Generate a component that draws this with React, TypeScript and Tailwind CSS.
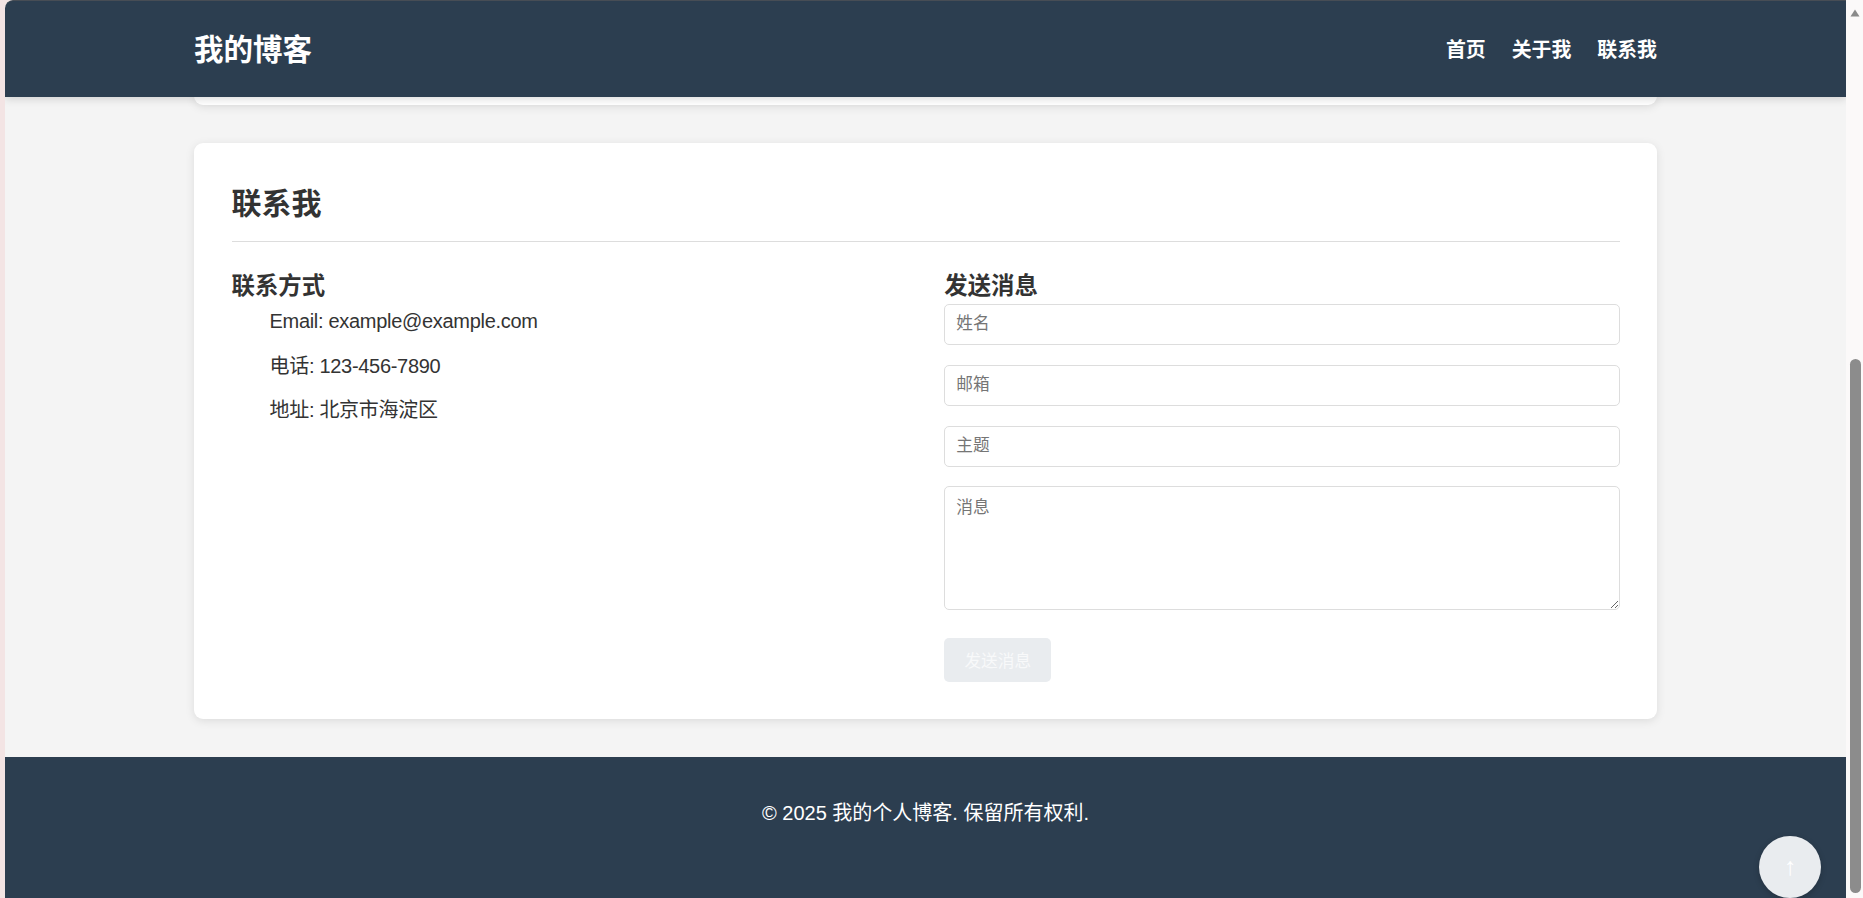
import React from "react";

const links = ["首页", "关于我", "联系我"];

const contactInfo = [
  "Email: example@example.com",
  "电话: 123-456-7890",
  "地址: 北京市海淀区",
];

const inputClass =
  "block w-full h-[41.5px] rounded-[5px] border border-[#dddddd] bg-white px-[11px] text-[16.67px] text-[#333] placeholder:text-[#757575] outline-none";

const Header = () => (
  <header className="relative z-10 h-[97px] shrink-0 rounded-tl-lg border-t border-[#474d55] bg-[#2c3e50] shadow-[0_2px_8px_rgba(0,0,0,0.15)]">
    <div className="mx-auto flex h-full w-[1463px] items-center justify-between pt-[2px]">
      <h1 className="text-[29.5px] font-bold text-white">我的博客</h1>
      <nav className="flex gap-[26px] pt-[2px] text-[19.9px] font-bold text-white">
        {links.map((l) => (
          <a key={l} href="#">
            {l}
          </a>
        ))}
      </nav>
    </div>
  </header>
);

const ContactCard = () => (
  <section className="mx-auto mt-[38px] h-[576px] w-[1463px] shrink-0 rounded-[9px] bg-white p-[37.5px] shadow-[0_2px_10px_rgba(0,0,0,0.1)]">
    <h2 className="border-b border-[#dddddd] pb-[15px] text-[30px] font-bold leading-[45px] text-[#333]">
      联系我
    </h2>

    <div className="mt-[27px] grid grid-cols-2 gap-[37.5px]">
      {/* left column */}
      <div>
        <h3 className="text-[23.4px] font-bold leading-[35px] text-[#333]">联系方式</h3>
        <ul className="mt-[1.5px] pl-[38px]">
          {contactInfo.map((c) => (
            <li key={c} className="mb-[12.5px] text-[20px] leading-[32px] tracking-[-0.3px] text-[#333]">
              {c}
            </li>
          ))}
        </ul>
      </div>

      {/* right column */}
      <div>
        <h3 className="text-[23.4px] font-bold leading-[35px] text-[#333]">发送消息</h3>
        <form className="flex flex-col" onSubmit={(e) => e.preventDefault()}>
          <input className={inputClass} placeholder="姓名" />
          <input className={`${inputClass} mt-[19.5px]`} placeholder="邮箱" />
          <input className={`${inputClass} mt-[19.5px]`} placeholder="主题" />
          <textarea
            className="mt-[18.5px] block h-[124px] w-full rounded-[5px] border border-[#dddddd] bg-white px-[11px] py-[8px] text-[16.67px] text-[#333] placeholder:text-[#757575] outline-none"
            placeholder="消息"
          />
          <button
            type="submit"
            className="mt-[28px] h-[44px] w-[107px] rounded-[5px] bg-[#e9ecef] pt-[3px] text-[16.67px] text-[#f8f9fa]"
          >
            发送消息
          </button>
        </form>
      </div>
    </div>
  </section>
);

const Scrollbar = () => (
  <div className="flex w-[17px] shrink-0 flex-col items-center bg-[#fbf9f9]">
    <svg className="mt-[9px]" width="10" height="8" viewBox="0 0 10 8">
      <path d="M5 0.5 L9.5 7.5 L0.5 7.5 Z" fill="#8a8a8a" strokeLinejoin="round" />
    </svg>
    <div className="mb-[5px] ml-[2px] mt-auto h-[534px] w-[11px] rounded-full bg-[#8c8c8c]" />
  </div>
);

export default function App() {
  return (
    <div
      className="flex h-[898px] w-full overflow-hidden bg-[#f3e4e4]"
      style={{ fontFamily: '"Segoe UI", "Liberation Sans", "Noto Sans CJK SC", sans-serif' }}
    >
      <div className="relative ml-[5px] flex flex-1 flex-col overflow-hidden rounded-tl-lg bg-[#f4f4f4]">
        <Header />

        {/* bottom of the previous card, peeking under the header */}
        <div className="mx-auto -mt-[4px] h-[12px] w-[1463px] shrink-0 rounded-b-[9px] bg-white shadow-[0_2px_10px_rgba(0,0,0,0.1)]" />

        <ContactCard />

        <footer className="mt-[38px] flex-1 bg-[#2c3e50] pt-[40px] text-center">
          <p className="text-[20px] leading-[32px] text-white">© 2025 我的个人博客. 保留所有权利.</p>
        </footer>

        <button className="absolute bottom-0 right-[25px] flex h-[62px] w-[62px] items-center justify-center rounded-full bg-[#e9ecef] text-[25px] text-white shadow-[0_2px_6px_rgba(0,0,0,0.2)]">
          ↑
        </button>
      </div>
      <Scrollbar />
    </div>
  );
}
